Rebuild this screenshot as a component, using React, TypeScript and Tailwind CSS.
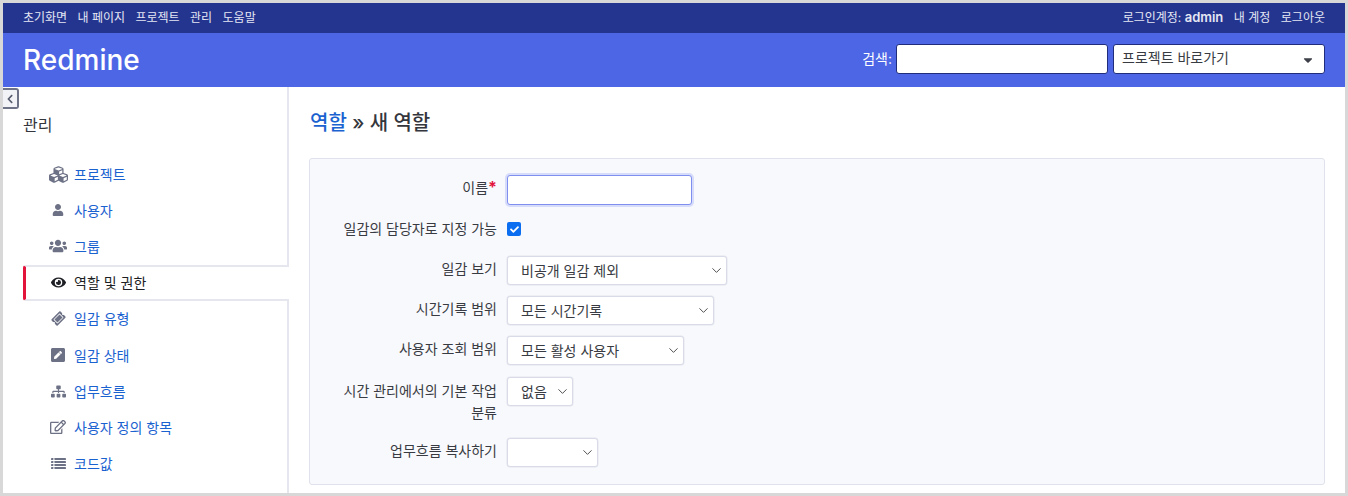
import React from "react";
import { FaCubes, FaUser, FaUsers, FaEye, FaTicketAlt, FaPenSquare, FaSitemap, FaRegEdit, FaCheck, FaChevronLeft, FaCaretDown } from "react-icons/fa";
import { ChevronDown } from "lucide-react";

const font = "[font-family:Inter,'Noto_Sans_CJK_KR',sans-serif]";

function ListIcon({ size }: { size: number; className?: string }) {
  return (
    <svg width={size} height={size} viewBox="0 0 15 15" fill="currentColor">
      {[2, 5, 8, 11].map((y) => (
        <g key={y}>
          <rect x="0" y={y} width="2.4" height="2" rx="0.4" />
          <rect x="3.4" y={y} width="11.6" height="2" rx="0.4" />
        </g>
      ))}
    </svg>
  );
}

const items = [
  { label: "프로젝트", Icon: FaCubes, size: 19, cls: "" },
  { label: "사용자", Icon: FaUser, size: 12, cls: "" },
  { label: "그룹", Icon: FaUsers, size: 18, cls: "" },
  { label: "역할 및 권한", Icon: FaEye, size: 15, cls: "", active: true },
  { label: "일감 유형", Icon: FaTicketAlt, size: 13, cls: "-rotate-45" },
  { label: "일감 상태", Icon: FaPenSquare, size: 16, cls: "" },
  { label: "업무흐름", Icon: FaSitemap, size: 15, cls: "" },
  { label: "사용자 정의 항목", Icon: FaRegEdit, size: 16, cls: "" },
  { label: "코드값", Icon: ListIcon, size: 15, cls: "" },
];

function Sel({ text, w }: { text: string; w: string }) {
  return (
    <div className={`${w} h-[29px] flex items-center justify-between pl-[13px] pr-[1px] bg-white border border-[#d9dce8] shadow-[0_0_0_0.5px_#e3e5ee] rounded-[3px] text-[14px] text-[#383b42]`}>
      <span>{text}</span>
      <ChevronDown size={15} strokeWidth={1.5} className="text-[#444] mr-[1px]" />
    </div>
  );
}

function Row({ label, children, className = "", pt = "pt-[2px]" }: { label: React.ReactNode; children: React.ReactNode; className?: string; pt?: string }) {
  return (
    <div className={`flex ${className}`}>
      <div className={`w-[165px] ml-[22px] text-right text-[14px] leading-[22px] text-[#383b42] ${pt} shrink-0 break-keep`}>{label}</div>
      <div className="ml-[10px]">{children}</div>
    </div>
  );
}

export default function App() {
  return (
    <div className={`${font} w-[1348px] h-[496px] border-[3px] border-[#d8d8d8] overflow-hidden flex flex-col bg-white`}>
      <div className="h-[30px] shrink-0 bg-[#243590] flex items-center justify-between pl-[20px] pr-[20px] text-[12px] text-[#e4e7f3]">
        <div className="flex gap-[10.4px]">
          <span>초기화면</span><span>내 페이지</span><span>프로젝트</span><span>관리</span><span>도움말</span>
        </div>
        <div className="flex gap-[10.5px] items-center">
          <span>로그인계정: <span className="text-[13px] font-semibold">admin</span></span><span>내 계정</span><span>로그아웃</span>
        </div>
      </div>
      <div className="h-[54px] shrink-0 bg-[#4c66e6] flex items-center justify-between pl-[20px] pr-[20px]">
        <div className="text-[28px] font-medium text-white leading-none -mt-[1px]">Redmine</div>
        <div className="flex items-center text-[14px] text-white -mt-[3px]">
          <span className="mr-[4px]">검색:</span>
          <div className="w-[212px] h-[30px] bg-white border border-[#1f2d7a] rounded-[3px]" />
          <div className="w-[212px] h-[30px] ml-[5px] bg-white border border-[#1f2d7a] rounded-[3px] flex items-center justify-between pl-[8px] pr-[9px] text-[#383b42]">
            <span className="-mt-[2px]">프로젝트 바로가기</span>
            <FaCaretDown size={14} className="text-[#3d4048] mt-[2px]" />
          </div>
        </div>
      </div>
      <div className="flex-1 flex min-h-0">
        <aside className="w-[286px] shrink-0 border-r-2 border-[#e6e7ee] relative pl-[20px]">
          <div className="absolute left-0 top-[1px] w-[16px] h-[21px] bg-[#f2f3f6] border-2 border-l-0 border-[#6f7387] rounded-r-[3px] flex items-center justify-center">
            <FaChevronLeft size={10} className="text-[#555a6e]" />
          </div>
          <div className="text-[16px] text-[#33363c] pt-[27px] leading-[22px]">관리</div>
          <div className="mt-[20px]">
            {items.map(({ label, Icon, size, cls, active }) => (
              <div
                key={label}
                className={
                  active
                    ? "h-[36.2px] -mr-[2px] relative z-10 flex items-center bg-white border-l-[3px] border-l-[#e3143c] border-y-2 border-y-[#e6e7ee] rounded-l-[3px] text-[#1d1f24] text-[14px]"
                    : "h-[36.2px] flex items-center text-[#1a62d0] text-[14px]"
                }
              >
                <span className={`${active ? "ml-[21px] text-[#1d1f24]" : "ml-[24px] text-[#6d7185]"} w-[22px] flex justify-center shrink-0`}>
                  <Icon size={size} className={cls} />
                </span>
                <span className="ml-[5px]">{label}</span>
              </div>
            ))}
          </div>
        </aside>
        <main className="flex-1 pl-[20px] pr-[20px] min-w-0">
          <h2 className="text-[20px] leading-[28px] font-medium text-[#33363c] pt-[22px] pl-[1px]">
            <span className="text-[#1a62d0]">역할</span> » 새 역할
          </h2>
          <div className="mt-[21px] h-[327px] bg-[#f8f9fc] border border-[#dfe1ec] rounded-[3px] pt-[16px]">
            <Row label={<>이름<span className="text-[#e3143c] font-bold text-[16px] leading-none">*</span></>}>
              <div className="w-[185px] h-[30px] bg-white border border-[#7f8ff0] rounded-[3px] shadow-[0_0_0_2px_#d6dcfa]" />
            </Row>
            <Row label="일감의 담당자로 지정 가능" className="mt-[11px]">
              <div className="w-[14px] h-[14px] mt-[6px] bg-[#0b6ef0] rounded-[2px] flex items-center justify-center">
                <FaCheck size={9} className="text-white" />
              </div>
            </Row>
            <Row label="일감 보기" className="mt-[16px]"><Sel text="비공개 일감 제외" w="w-[220px]" /></Row>
            <Row label="시간기록 범위" className="mt-[11px]"><Sel text="모든 시간기록" w="w-[207px]" /></Row>
            <Row label="사용자 조회 범위" className="mt-[11px]"><Sel text="모든 활성 사용자" w="w-[177px]" /></Row>
            <Row label="시간 관리에서의 기본 작업 분류" className="mt-[12px]" pt="pt-[3px]"><Sel text="없음" w="w-[66px]" /></Row>
            <Row label="업무흐름 복사하기" className="mt-[14px]"><Sel text="" w="w-[91px]" /></Row>
          </div>
        </main>
      </div>
    </div>
  );
}
